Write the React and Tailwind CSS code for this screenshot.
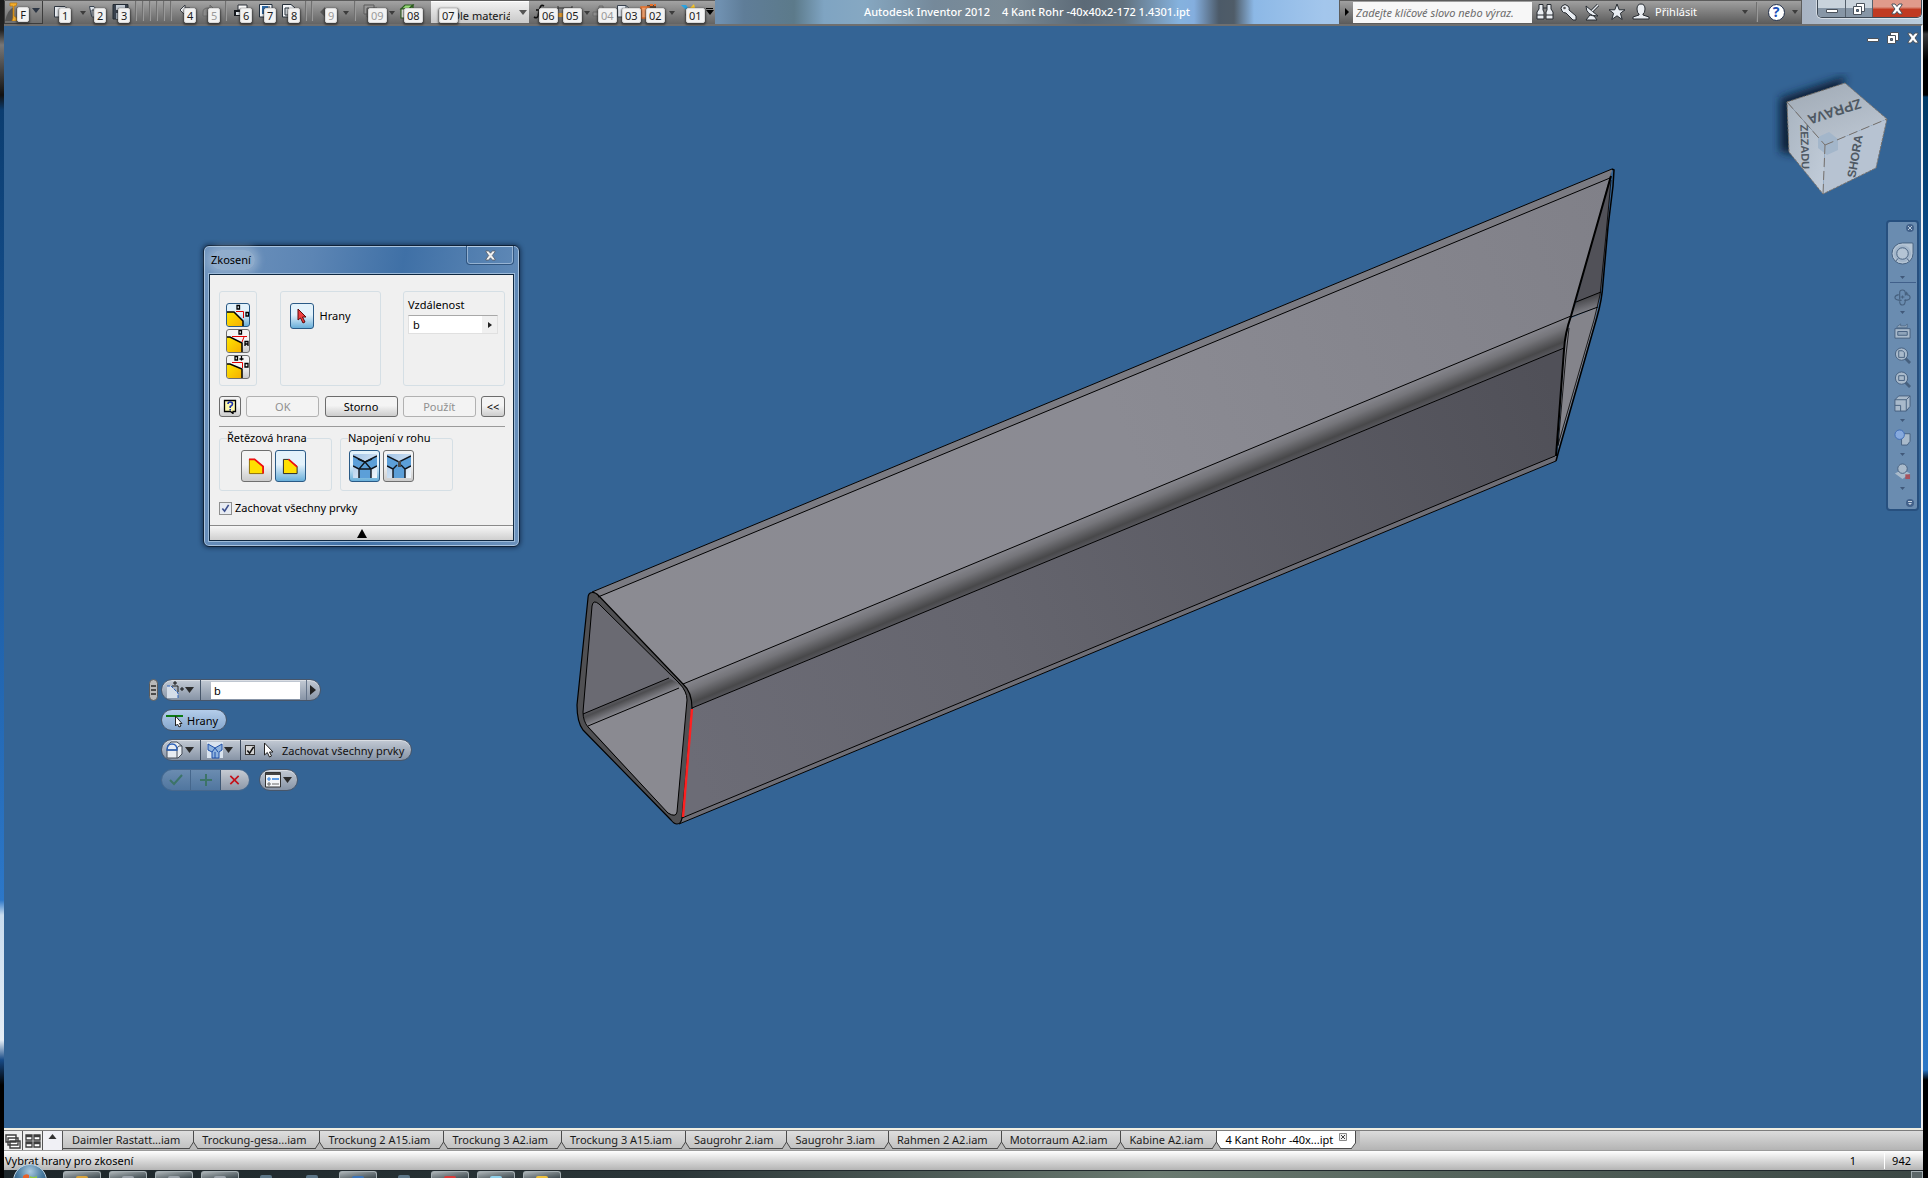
import React from "react";

const SANS = "font-['Noto_Sans','Open_Sans',sans-serif]";

/* ---------- shared bits ---------- */

function Caret({ className = "w-[7px] h-[4px]" }) {
  return (
    <svg viewBox="0 0 8 4" className={className} preserveAspectRatio="none" aria-hidden="true">
      <path d="M0 0H8L4 4Z" fill="currentColor" />
    </svg>
  );
}

/* ---------- quick access icons ---------- */

const quickIcons = {
  new: (
    <g stroke="#2f3640" fill="#e6eaef">
      <path d="M1.500 2.500H12L14.500 5V13H1.500Z" />
    </g>
  ),
  open: (
    <g stroke="#39424e" fill="#dfe5ec">
      <path d="M1.500 2.500H6L7.500 4.500H12V12H3.500Z" />
      <path d="M4 6H15L12 13H4Z" />
    </g>
  ),
  save: (
    <g>
      <path d="M1 0.500H16V15H1Z" fill="#39424f" stroke="#222a33" />
      <path d="M4 1H13V6H4Z" fill="#c4ccd5" />
      <path d="M4 9H13V15H4Z" fill="#aab6c4" />
    </g>
  ),
  undo: <path d="M7 1L2 6L7 11V8H12V4H7Z" fill="#f2f4f7" stroke="#3a3f46" />,
  redo: <path d="M1 12V8Q1 4 6 4H8V1L13 6L8 10V8H6V12Z" fill="#8b8b8b" stroke="#6a6a6a" />,
  print: (
    <g>
      <path d="M4 1H13V6H4Z" fill="#fff" stroke="#2a2f36" />
      <path d="M0 6H16V12H0Z" fill="#15181c" />
      <path d="M2 8H14V11H2Z" fill="#e7ecf1" />
    </g>
  ),
  preview: (
    <g>
      <path d="M1.500 0.500H14V13H1.500Z" fill="#f6f8fa" stroke="#25313e" />
      <path d="M4 2H10V10H4Z" fill="#2e6aa8" />
      <path d="M11 2V10" stroke="#25313e" />
    </g>
  ),
  project: (
    <g stroke="#27303a" fill="#f3f5f8">
      <path d="M0.500 0.500H9L13 4V13H0.500Z" />
      <path d="M3 4H7L8 6H12V11H3Z" fill="#dfe4ea" />
    </g>
  ),
  back: <path d="M6 3L1 8L6 13V10H12V6H6Z" fill="#565656" />,
  select: (
    <g fill="none" stroke="#5b5b5b">
      <path d="M2 1H12V10H2Z" fill="#9a9a9a" />
      <path d="M5 4H15V13H5Z" fill="#8d8d8d" />
    </g>
  ),
  cube: (
    <g stroke="#2d5a20" strokeWidth="1.200">
      <path d="M3 5L7 1H15L11 5Z" fill="#9be37b" />
      <path d="M3 5H11V14H3Z" fill="#f4f7f2" />
      <path d="M11 5L15 1V9L11 14Z" fill="#5fae3f" />
    </g>
  ),
  fx: (
    <g fill="none" stroke="#111" strokeWidth="1.600">
      <path d="M11 2Q8 0 7 4L5 12Q4 15 1 13" />
      <path d="M3 6H10" />
    </g>
  ),
  measure: (
    <g>
      <path d="M1 2V7M15 2V7M1 4H15" stroke="#333" fill="none" />
      <path d="M1 9H7V13H1Z" fill="#e79a2a" />
    </g>
  ),
  plus: <path d="M7 2H11V8H15V12H1V8H7Z" fill="#8e8e8e" stroke="#6a6a6a" />,
  page: (
    <g stroke="#39424e">
      <path d="M1.500 1.500H10L14.500 6V13H1.500Z" fill="#e8edf4" />
      <path d="M10 1.500V6H14.500Z" fill="#fff" />
    </g>
  ),
  box: (
    <g>
      <path d="M7 1H16V8H9V5H7Z" fill="#5a4434" />
      <path d="M1 3H9V14H1Z" fill="#f7a36d" stroke="#e8702a" strokeWidth="1.500" />
      <path d="M10 1H16" stroke="#e8702a" strokeWidth="2" strokeDasharray="3 1" />
    </g>
  ),
  brush: (
    <g>
      <path d="M1 1H6L9 5L6 6Z" fill="#2aa3e0" />
      <path d="M14 0L9 5L11 8L15 4Z" fill="#f6c52a" />
      <path d="M7 6L9 8L5 12Z" fill="#3a3a3a" />
    </g>
  ),
};

function QuickTool({ icon, tip, label, off }) {
  return (
    <button type="button" aria-label={label} className="relative h-6 w-6 shrink-0">
      <svg viewBox="0 0 17 16" className="absolute left-0 top-[3px] h-4 w-[17px]" aria-hidden="true">
        {quickIcons[icon]}
      </svg>
      <KeyTip tip={tip} off={off} />
    </button>
  );
}

function KeyTip({ tip, off }) {
  return (
    <span
      className={
        "absolute left-[6px] top-[7px] z-10 flex h-[15px] min-w-3 items-center justify-center rounded-[2px] border border-[#d8d8d8] bg-[#f2f2f2] px-[2px] text-[11px] leading-none shadow-[0_1px_2px_1px_rgba(40,40,40,0.7)] " +
        (off ? "text-[#9a9a9a]" : "text-[#1c1c1c]")
      }
    >
      {tip}
    </span>
  );
}

function DropArrow({ className, label }) {
  return (
    <button type="button" aria-label={label} className={"flex h-6 shrink-0 items-center justify-center text-[#3c3c3c] " + className}>
      <Caret className="h-[4px] w-[6px]" />
    </button>
  );
}

function Rule({ className }) {
  return <span className={"h-5 w-px shrink-0 bg-[#999] shadow-[-1px_0_0_#707070] " + className} />;
}

function QuickAccess() {
  return (
    <div className="flex h-6 shrink-0 items-start border-t border-[#5c5c5c] bg-gradient-to-b from-[#a3a3a3] to-[#646464]">
      <button type="button" aria-label="Nabídka aplikace" className="relative h-[23px] w-[39px] shrink-0 border border-t-0 border-[#3c3c3c] bg-gradient-to-b from-[#9c9c9c] to-[#6f6f6f]">
        <svg viewBox="0 0 16 20" className="absolute left-0 top-0 h-5 w-4" aria-hidden="true">
          <path d="M0 20Q3 8 9 6L9 20Z" fill="#555" />
          <path d="M5 2H12L11 5H9V15L12 17V20H7L8 17V5H5Z" fill="#f2ae2e" stroke="#b97608" strokeWidth="0.700" />
        </svg>
        <span className="absolute left-[6px] top-[-1px]"><KeyTip tip="F" /></span>
        <span className="absolute left-[27px] top-[7px] text-[#2c3644]"><Caret className="block h-[5px] w-2" /></span>
      </button>
      <span className="w-[10px]" />
      <QuickTool icon="new" tip="1" label="Nový" />
      <DropArrow className="w-[11px]" label="Nový: možnosti" />
      <QuickTool icon="open" tip="2" label="Otevřít" />
      <QuickTool icon="save" tip="3" label="Uložit" />
      <Rule className="ml-0" /><Rule className="ml-[6px]" /><Rule className="ml-[6px]" /><Rule className="ml-[6px]" /><Rule className="ml-[6px]" /><Rule className="ml-[6px]" />
      <span className="w-[6px]" />
      <QuickTool icon="undo" tip="4" label="Zpět" />
      <QuickTool icon="redo" tip="5" label="Znovu" off />
      <Rule className="mr-[7px]" />
      <QuickTool icon="print" tip="6" label="Tisk" />
      <QuickTool icon="preview" tip="7" label="Náhled" />
      <QuickTool icon="project" tip="8" label="Projekty" />
      <Rule className="ml-0" /><Rule className="ml-[5px] mr-[6px]" />
      <QuickTool icon="back" tip="9" label="Návrat" off />
      <DropArrow className="w-[6px]" label="Návrat: možnosti" />
      <Rule className="ml-[6px] mr-[6px]" />
      <QuickTool icon="select" tip="09" label="Výběr" off />
      <DropArrow className="w-3" label="Výběr: možnosti" />
      <QuickTool icon="cube" tip="08" label="Vzhled" />
      <span className="w-[9px]" />
      <div className="relative h-[22px] w-[98px] shrink-0 border-t border-white bg-gradient-to-b from-[#f1f1f1] to-[#c9c9c9]">
        <select aria-label="Barva" className="h-[21px] w-full appearance-none bg-transparent pl-[21px] pr-[19px] text-[11px] leading-[21px] text-[#111] outline-none">
          <option>Dle materiálu</option>
        </select>
        <span className="absolute right-[2px] top-[8px] text-[#555]"><Caret className="block h-[5px] w-2" /></span>
        <span className="absolute left-[2px] top-[-1px]"><KeyTip tip="07" /></span>
      </div>
      <span className="w-1" />
      <QuickTool icon="fx" tip="06" label="Parametry" />
      <QuickTool icon="measure" tip="05" label="Měřit" />
      <DropArrow className="w-[11px]" label="Měřit: možnosti" />
      <QuickTool icon="plus" tip="04" label="Přidat" off />
      <QuickTool icon="page" tip="03" label="List" />
      <QuickTool icon="box" tip="02" label="Součást" />
      <DropArrow className="w-4" label="Součást: možnosti" />
      <QuickTool icon="brush" tip="01" label="Vzhledy" />
      <button type="button" aria-label="Přizpůsobit" className="flex h-5 w-[11px] shrink-0 flex-col items-center justify-center gap-[1px] text-black">
        <span className="h-px w-[7px] bg-black" />
        <Caret className="h-[5px] w-2" />
      </button>
    </div>
  );
}

/* ---------- info center ---------- */

function InfoIcon({ label, children }) {
  return (
    <button type="button" aria-label={label} className="flex h-6 w-6 shrink-0 items-center justify-center">
      <svg viewBox="0 0 18 18" className="h-[18px] w-[18px]" aria-hidden="true">{children}</svg>
    </button>
  );
}

function InfoCenter() {
  return (
    <div className="flex h-6 shrink-0 items-center border border-[#5c5c5c] bg-gradient-to-b from-[#a0a0a0] to-[#5e5e5e] text-[#f3f3f3]">
      <button type="button" aria-label="Sbalit" className="flex h-full w-[13px] items-center justify-center text-black">
        <svg viewBox="0 0 4 8" className="h-2 w-1" aria-hidden="true"><path d="M0 0L4 4L0 8Z" fill="currentColor" /></svg>
      </button>
      <input aria-label="Hledat" placeholder="Zadejte klíčové slovo nebo výraz." className="mr-px h-[21px] w-[179px] bg-[#f7f7f7] pl-[3px] text-[11px] italic text-[#555] outline-none placeholder:text-[#6b6b6b]" />
      <InfoIcon label="Hledat">
        <g fill="#e9edf2" stroke="#262b31">
          <path d="M3 1.500H7V7L8 9V16H1V9L3 6Z" />
          <path d="M11 1.500H15V6L17 9V16H10V9L11 7Z" />
          <path d="M7 5H11M1 12H8M10 12H17" />
        </g>
      </InfoIcon>
      <InfoIcon label="Předplatné">
        <path d="M2 3Q5 0 8 3Q10 5 9 7L16 13V17H13L6 10Q3 10 2 8Q0 5 2 3Z" fill="#e9edf2" stroke="#262b31" />
        <circle cx="4.500" cy="5" r="1.300" fill="#555" />
      </InfoIcon>
      <InfoIcon label="Komunikační centrum">
        <g fill="#e9edf2" stroke="#262b31">
          <path d="M6 12L2 17H13L10 13Z" />
          <path d="M2 3Q2 13 14 13Z" />
          <path d="M8 8L14 2" strokeWidth="3" />
          <path d="M8 8L14 2" stroke="#e9edf2" strokeWidth="1.500" />
        </g>
      </InfoIcon>
      <InfoIcon label="Oblíbené">
        <path d="M9 1L11.200 6.800H17L12.400 10.300L14.200 16.500L9 12.800L3.800 16.500L5.600 10.300L1 6.800H6.800Z" fill="#e9edf2" stroke="#262b31" />
      </InfoIcon>
      <button type="button" className="flex h-6 items-center gap-[2px] text-[11px] text-white">
        <span className="flex w-6 justify-center">
          <svg viewBox="0 0 18 18" className="h-[18px] w-[18px]" aria-hidden="true">
            <path d="M9 1Q13 1 13 6Q13 10 11 11V12L17 14V16H1V14L7 12V11Q5 10 5 6Q5 1 9 1Z" fill="#e9edf2" stroke="#262b31" />
          </svg>
        </span>
        Přihlásit
      </button>
      <DropArrow className="ml-[42px] w-3" label="Účet" />
      <Rule className="ml-[6px] mr-[6px]" />
      <button type="button" aria-label="Nápověda" className="flex h-6 w-6 items-center justify-center">
        <span className="flex h-[17px] w-[17px] items-center justify-center rounded-full border border-[#22304a] bg-white text-[14px] font-bold leading-none text-[#1d50b8]">?</span>
      </button>
      <DropArrow className="w-[13px]" label="Nápověda: možnosti" />
    </div>
  );
}

function WinGlyph({ kind }) {
  return (
    <svg viewBox="0 0 12 12" className="h-3 w-3" aria-hidden="true">
      {kind === "min" && <path d="M0.500 6.500H11.500V9.500H0.500Z" fill="#fff" stroke="#4a525c" />}
      {kind === "max" && (
        <g fill="#fff" stroke="#4a525c">
          <path d="M3.500 0.500H11.500V8.500H3.500Z" />
          <path d="M0.500 3.500H8.500V11.500H0.500Z" />
          <path d="M3.500 6.500H5.500V8.500H3.500Z" fill="#5a7fa6" />
        </g>
      )}
      {kind === "close" && (
        <path d="M1 1H4L6 3.500L8 1H11V2L8 6L11 10V11H8L6 8.500L4 11H1V10L4 6L1 2Z" fill="#fff" stroke="#4a525c" />
      )}
    </svg>
  );
}

function TitleBar() {
  return (
    <header className="flex h-6 w-full shrink-0 bg-[linear-gradient(90deg,#6f90b0_0px,#6f90b0_716px,#5f7d98_740px,#5c7a8a_790px,#7fa4c2_820px,#86a8c2_860px,#75899a_930px,#7b8b96_1000px,#5c6a77_1080px,#62727f_1120px,#85b2de_1175px,#84aede_1190px,#4c5a68_1215px,#4f5c68_1230px,#8cb8e6_1250px,#a3c6ec_1320px,#a8b4c4_1800px,#b9cddd_100%)]">
      <QuickAccess />
      <h1 className="flex h-6 min-w-0 flex-1 items-center justify-center gap-3 whitespace-nowrap text-[11px] font-medium leading-6 text-white">
        <span>Autodesk Inventor 2012</span>
        <span>4 Kant Rohr -40x40x2-172 1.4301.ipt</span>
      </h1>
      <InfoCenter />
      <div className="ml-[15px] mr-px flex h-[18px] shrink-0 overflow-hidden rounded-b-[5px] border border-t-0 border-[#3f4a56] shadow-[0_0_0_1px_rgba(255,255,255,0.5)]">
        <button type="button" aria-label="Minimalizovat" className="flex w-7 items-center justify-center border-r border-[#55606c] bg-gradient-to-b from-[#c9d3dc] from-45% to-[#8796a6] to-50%"><WinGlyph kind="min" /></button>
        <button type="button" aria-label="Obnovit" className="flex w-[27px] items-center justify-center border-r border-[#55606c] bg-gradient-to-b from-[#c9d3dc] from-45% to-[#8796a6] to-50%"><WinGlyph kind="max" /></button>
        <button type="button" aria-label="Zavřít" className="flex w-12 items-center justify-center bg-gradient-to-b from-[#e09a8b] from-40% to-[#c03a22] to-55%"><WinGlyph kind="close" /></button>
      </div>
    </header>
  );
}

/* ---------- 3D model ---------- */

function TubeModel() {
  return (
    <svg viewBox="573 160 1046 670" className="absolute left-[569px] top-[134px] h-[670px] w-[1046px]" role="img" aria-label="4 Kant Rohr">
      <defs>
        <linearGradient id="top" gradientUnits="userSpaceOnUse" x1="600" y1="600" x2="1610" y2="180">
          <stop offset="0" stopColor="#8b8b92" /><stop offset="0.500" stopColor="#8b8b93" /><stop offset="1" stopColor="#808088" />
        </linearGradient>
        <linearGradient id="side" gradientUnits="userSpaceOnUse" x1="690" y1="760" x2="1560" y2="400">
          <stop offset="0" stopColor="#6c6c76" /><stop offset="0.350" stopColor="#65656e" /><stop offset="1" stopColor="#505058" />
        </linearGradient>
        <linearGradient id="bend" gradientUnits="userSpaceOnUse" x1="683" y1="684" x2="693.600" y2="709.600">
          <stop offset="0" stopColor="#86868d" /><stop offset="0.300" stopColor="#75757a" /><stop offset="0.750" stopColor="#48484a" /><stop offset="1" stopColor="#5c5c63" />
        </linearGradient>
        <linearGradient id="innerBend" gradientUnits="userSpaceOnUse" x1="620" y1="698" x2="625" y2="710">
          <stop offset="0" stopColor="#5c5c62" /><stop offset="0.300" stopColor="#4d4d50" /><stop offset="1" stopColor="#85858c" />
        </linearGradient>
        <linearGradient id="endBend" gradientUnits="userSpaceOnUse" x1="1586" y1="298" x2="1590" y2="312">
          <stop offset="0" stopColor="#48484c" /><stop offset="1" stopColor="#85858c" />
        </linearGradient>
      </defs>

      <path d="M592 592L1612 169L1610 178L1571 317L1565 337L1556 461L679 824L600 740Z" fill="url(#top)" />
      <path d="M592 592L1612 169L1610 178L598 597Z" fill="#7b7b82" />
      <path d="M683 684L1571 316L1566 336L1564 348L692 708L689 693Z" fill="url(#bend)" />
      <path d="M692 708L1564 348L1556 456L682 818Z" fill="url(#side)" />
      <path d="M682 818L1556 456L1556 461L679 824Z" fill="#6e6e76" />

      <path d="M1611 172L1608 227L1601 293L1576 302Z" fill="#515158" />
      <path d="M1576 302L1601 292L1598 307L1571 317Z" fill="url(#endBend)" />
      <path d="M1571 318L1598 307L1594 325L1558 450L1564 350L1566 336Z" fill="#84848b" />

      <path d="M588 598Q588 593 592 592.500Q595 592 599 596L683 684Q692 692 692 708L682 818Q681 824 677 824Q674 824 671 820L583 730Q577 722 577 705Z" fill="#505053" stroke="#000" strokeWidth="1.200" />
      <path d="M592 606Q593 600 599 604L679 683L583 714Z" fill="#6a6a72" />
      <path d="M583 714L669 678L679 684L684 689L588 727Q583 721 583 714Z" fill="url(#innerBend)" />
      <path d="M588 726L681 687Q687 693 687 700L677 812Q676 817 668 813Z" fill="#8a8a91" />

      <g fill="none" stroke="#000" strokeWidth="1">
        <path d="M592 606Q593 599 599 604L679 683Q687 691 687 700L677 812Q676 818 668 813L588 727Q583 721 583 712Z" />
        <path d="M583 714L669 678M588 726L679 688" />
        <path d="M592 592L1612 169M598 597L1610 178M683 684L1571 316M692 708L1564 348M682 818L1555 456M679 824L1556 461" />
        <path d="M1612 169L1614 170L1613 186L1608 227L1603 283Q1602 300 1597 317L1559 450L1556 461" strokeWidth="1.500" />
        <path d="M1611 180L1606 235L1600 295L1594 320L1558 445" strokeWidth="0.800" />
        <path d="M1611 176L1571 316Q1565 333 1564 350L1556 456" strokeWidth="2" />
        <path d="M1576 302L1601 292M1571 317L1598 307" />
        <path d="M1569 328L1566 355L1558 446" strokeWidth="0.800" />
      </g>
      <path d="M692 709L683 817" stroke="#ff2020" strokeWidth="2.400" />
    </svg>
  );
}

function ViewCube() {
  return (
    <svg viewBox="1772 72 126 136" className="absolute right-[23px] top-[46px] h-[136px] w-[126px]" role="img" aria-label="ViewCube">
      <defs>
        <filter id="soft" x="-30%" y="-30%" width="160%" height="160%"><feGaussianBlur stdDeviation="4" /></filter>
        <linearGradient id="cubeTop" x1="0" y1="0" x2="0.600" y2="1"><stop offset="0" stopColor="#9fa9b4" /><stop offset="1" stopColor="#bac4d0" /></linearGradient>
        <linearGradient id="cubeLeft" x1="0" y1="0" x2="1" y2="1"><stop offset="0" stopColor="#a9b4c0" /><stop offset="1" stopColor="#c3cedb" /></linearGradient>
      </defs>
      <path d="M1780 98L1846 76L1830 120L1798 155L1780 152Z" fill="#10233a" filter="url(#soft)" />
      <path d="M1787 102L1845 83L1887 119L1825 145Z" fill="url(#cubeTop)" />
      <path d="M1787 102L1825 145L1823 194L1789 152Z" fill="url(#cubeLeft)" />
      <path d="M1825 145L1887 119L1876 168L1823 194Z" fill="#b7c3d2" />
      <path d="M1818 137L1829 132L1838 139V150L1827 155L1818 148Z" fill="#a3b6ca" />
      <g fill="none" stroke="#77716c" strokeWidth="1">
        <path d="M1787 102L1845 83L1887 119L1876 168L1823 194L1789 152Z" strokeDasharray="3 1" />
        <path d="M1787 102L1825 145M1825 145L1887 119M1825 145L1823 194" strokeDasharray="9 4" />
      </g>
      <g fill="#4f5963" className="font-['Liberation_Sans',sans-serif] font-bold" textAnchor="middle">
        <text transform="translate(1833 107) rotate(162)" className="text-[14px]">ZPRAVA</text>
        <text transform="translate(1801 147) rotate(88)" className="text-[11px]">ZEZADU</text>
        <text transform="translate(1859 157) rotate(-80)" className="text-[12px]">SHORA</text>
      </g>
    </svg>
  );
}

/* ---------- navigation bar ---------- */

function NavButton({ label, className, children }) {
  return (
    <button type="button" aria-label={label} className={"flex w-full shrink-0 items-center justify-center " + className}>
      <svg viewBox="0 0 18 18" className="h-[17px] w-[17px]" aria-hidden="true" fill="#a9bacb" stroke="#46607e" strokeWidth="1">
        {children}
      </svg>
    </button>
  );
}

function NavCaret({ label }) {
  return (
    <button type="button" aria-label={label} className="flex h-[10px] w-full items-center justify-center text-[#41597a]">
      <Caret className="h-[3px] w-[5px]" />
    </button>
  );
}

function NavigationBar() {
  return (
    <nav aria-label="Navigace" className="absolute right-[2px] top-[194px] flex w-[33px] flex-col items-center rounded-[4px] border-2 border-[#27507f] bg-[#6a8cb0] pb-[2px]">
      <button type="button" aria-label="Zavřít navigaci" className="mr-[3px] mt-[2px] flex h-2 w-2 items-center justify-center self-end rounded-full bg-[#42618a] text-[#b9c9da]">
        <svg viewBox="0 0 8 8" className="h-2 w-2" aria-hidden="true"><path d="M2 2L6 6M6 2L2 6" stroke="currentColor" /></svg>
      </button>
      <button type="button" aria-label="Navigační kolo" className="mt-2 flex h-[26px] w-full items-center justify-center">
        <svg viewBox="0 0 24 24" className="h-[23px] w-[23px]" aria-hidden="true" fill="#b4c4d4" stroke="#46607e">
          <path d="M12 1H22Q23 1 23 2V12A11 11 0 1 1 12 1Z" />
          <circle cx="12" cy="12" r="9" fill="#a3b6ca" stroke="none" />
          <circle cx="12" cy="12" r="6" />
          <path d="M7.500 17L5 20M16.500 17L19 20" />
        </svg>
      </button>
      <div className="h-[6px]" />
      <NavCaret label="Navigační kolo: možnosti" />
      <div className="h-px w-[26px] bg-[#41608a]" />
      <NavButton label="Orbita" className="mt-1 h-5">
        <g fill="none" strokeWidth="1.200">
          <path d="M6 11V4Q6 1 9 1Q12 1 12 5V7M12 11Q12 17 9 17Q6 17 6 13" />
          <path d="M5 6Q1 7 1 9Q1 12 8 12M11 12Q17 12 17 9Q17 6 13 6" />
          <path d="M9 7V10M7 8.500H11M13 3V6M12 4.500H15" />
        </g>
      </NavButton>
      <NavCaret label="Orbita: možnosti" />
      <NavButton label="Otočit pohled" className="mt-[2px] h-6">
        <path d="M1 6H17V16H1Z" /><path d="M4 9H14V13H4Z" fill="#8fa4ba" />
        <path d="M3 4L7 1V3H12L14 1V5H3Z" strokeWidth="0.700" fill="#8fa4ba" />
      </NavButton>
      <NavButton label="Zoom vše" className="h-6">
        <path d="M12 12L17 17" strokeWidth="3" /><circle cx="8" cy="7.500" r="6.500" /><path d="M5 4H9L11 6V11H5Z" />
      </NavButton>
      <NavButton label="Zoom okno" className="h-6">
        <path d="M12 12L17 17" strokeWidth="3" /><circle cx="8" cy="7.500" r="6.500" /><path d="M5 5H11V10H5Z" />
      </NavButton>
      <NavButton label="Pohled na plochu" className="h-6">
        <path d="M1 5L5 1H17V12L13 17H1Z" /><path d="M1 5H13V17M13 5L17 1M1 11H7V17" fill="none" />
      </NavButton>
      <NavCaret label="Pohled: možnosti" />
      <NavButton label="Vizuální styl" className="h-6">
        <path d="M8 8L11 5H17V13L14 17H8Z" /><circle cx="6" cy="6" r="5" fill="#86a9dd" stroke="#3e69b3" />
      </NavButton>
      <NavCaret label="Vizuální styl: možnosti" />
      <NavButton label="Stíny" className="h-6">
        <path d="M1 11L5 9H13L17 11L9 17Z" stroke="none" /><circle cx="9" cy="6" r="5" /><path d="M12 12H17V17H12Z" fill="#a7535e" stroke="none" />
      </NavButton>
      <NavCaret label="Stíny: možnosti" />
      <button type="button" aria-label="Přizpůsobit navigaci" className="mr-[3px] mt-[6px] flex h-2 w-2 flex-col items-center justify-center gap-px self-end rounded-full bg-[#42618a] text-[#c3d0de]">
        <span className="h-px w-1 bg-[#c3d0de]" /><Caret className="h-[2px] w-[4px]" />
      </button>
    </nav>
  );
}

/* ---------- chamfer dialog ---------- */

function ToolButton({ label, active, className, children }) {
  return (
    <button
      type="button"
      aria-label={label}
      aria-pressed={!!active}
      className={
        "flex shrink-0 items-center justify-center overflow-hidden rounded-[3px] border " +
        (active
          ? "border-[#2a5a86] bg-gradient-to-b from-[#e3f2fb] from-45% to-[#68afd9] "
          : "border-[#6f6f6f] bg-gradient-to-b from-[#f4f4f4] from-45% to-[#cbcbcb] ") +
        className
      }
    >
      {children}
    </button>
  );
}

function ChamferGlyph({ kind }) {
  return (
    <svg viewBox="0 0 24 24" className="h-6 w-6 shrink-0" aria-hidden="true">
      <defs>
        <linearGradient id={"gold" + kind} x1="0" y1="0" x2="1" y2="1"><stop offset="0" stopColor="#ffe600" /><stop offset="1" stopColor="#f5ac00" /></linearGradient>
      </defs>
      {kind === "dd" && (
        <g fill="none">
          <path d="M1 9H8L17 18V24H1Z" fill="url(#golddd)" />
          <path d="M1 9H8L17 18V24" stroke="#000" strokeWidth="1.500" />
          <path d="M10 8.500H17.500V15" stroke="#e00000" />
          <path d="M11 2.500H13.500V6H11ZM20 9.500H22.500V13H20Z" stroke="#000" strokeWidth="1.300" />
        </g>
      )}
      {kind === "da" && (
        <g fill="none">
          <path d="M1 8H4L16 14V24H1Z" fill="url(#goldda)" />
          <path d="M1 8H4L16 14V24" stroke="#000" strokeWidth="1.500" />
          <path d="M6 7.500H21M18 8L16 13" stroke="#e00000" />
          <path d="M13 1.500H15.500V5H13ZM19 17V12.500H22V17M19 15H22" stroke="#000" strokeWidth="1.300" />
        </g>
      )}
      {kind === "d2" && (
        <g fill="none">
          <path d="M1 9H4L16 14V24H1Z" fill="url(#goldd2)" />
          <path d="M1 9H4L16 14V24" stroke="#000" strokeWidth="1.500" />
          <path d="M6 7.500H16.500V13" stroke="#e00000" />
          <path d="M9 1.500H11.500V5H9ZM15.500 1V5.500M13.500 4H17.500M19 8.500H22V12H19Z" stroke="#000" strokeWidth="1.300" />
        </g>
      )}
    </svg>
  );
}

function EdgeGlyph({ open }) {
  return (
    <svg viewBox="0 0 18 18" className="h-[17px] w-[17px]" aria-hidden="true">
      <path d="M1.500 1.500H7L16 9V16.500H1.500Z" fill="#ffe000" stroke={open ? "#222" : "#8a6a00"} />
      <path d={open ? "M7 1.500L16 9.500" : "M1 1.500H7L16 9V16.500"} fill="none" stroke="#f01010" strokeWidth="1.800" />
    </svg>
  );
}

function CornerGlyph({ variant }) {
  const id = "sheet" + variant;
  return (
    <svg viewBox="0 0 24 24" className="h-6 w-6" aria-hidden="true">
      <defs>
        <linearGradient id={id} x1="0" y1="0" x2="1" y2="1"><stop offset="0" stopColor="#9fc2e6" /><stop offset="1" stopColor="#f2f7fc" /></linearGradient>
      </defs>
      <path d="M0 0H24V24H0Z" fill={"url(#" + id + ")"} />
      <path d="M0 2L12 8L24 2V12L18 15V24H6V15L0 12Z" fill="#5c9fd8" />
      <g fill="none" stroke="#10151c" strokeWidth="1.400">
        <path d="M0 2L12 8L24 2M0 12L6 15V24M24 12L18 15V24" />
        {variant === "flat" ? <path d="M6 15H18M5 5L12 8L18 15M19 5L12 8L6 15" /> : <path d="M6 15L10 11M18 15L14 11M12 7V12" />}
      </g>
      {variant === "flat" ? null : <path d="M11 7H14V13H11Z" fill="#4a4a4a" />}
    </svg>
  );
}

function PushButton({ children, className, ...rest }) {
  return (
    <button
      type="button"
      className={
        "flex h-[21px] shrink-0 items-center justify-center rounded-[3px] border text-[11px] leading-none disabled:border-[#b1b1b1] disabled:bg-[#f3f3f3] disabled:text-[#909090] enabled:border-[#6c6c6c] enabled:bg-gradient-to-b enabled:from-[#f4f4f4] enabled:from-45% enabled:to-[#cdcdcd] enabled:text-black " +
        className
      }
      {...rest}
    >
      {children}
    </button>
  );
}

const groupBox = "rounded-[3px] border border-[#d5dfe5]";

function ChamferDialog() {
  return (
    <section aria-label="Zkosení" className="absolute left-[199px] top-[219px] flex w-[317px] flex-col rounded-[6px] border border-[#0f2238] bg-[linear-gradient(100deg,#6f93bd_0%,#5c85b4_30%,#3f70a6_55%,#6d93bd_100%)] px-[5px] pb-[5px] shadow-[inset_0_0_0_1px_#a9c3de,0_0_4px_1px_rgba(10,25,50,0.6)]">
      <div className="flex h-7 items-start justify-between pl-[2px]">
        <h2 className="mt-1 rounded-full bg-[#b5c9de]/50 pr-1 text-[11px] leading-5 text-black shadow-[0_0_7px_4px_rgba(181,201,222,0.45)]">Zkosení</h2>
        <button type="button" aria-label="Zavřít dialog" className="flex h-[19px] w-12 items-center justify-center rounded-b-[4px] border border-t-0 border-[#30557f] shadow-[inset_0_0_0_1px_rgba(190,210,232,0.6)]">
          <svg viewBox="0 0 12 12" className="h-[11px] w-[11px]" aria-hidden="true">
            <path d="M1 1H4L6 3.500L8 1H11V2L8 6L11 10V11H8L6 8.500L4 11H1V10L4 6L1 2Z" fill="#f3f3f3" stroke="#5c6470" />
          </svg>
        </button>
      </div>
      <div className="border border-[#0e2740] bg-[#f0f0f0] shadow-[0_0_0_1px_#9dbad8]">
        <div className="pl-[9px] pr-2 pt-4">
          <div className="flex h-[95px] justify-between">
            <div className={"flex w-[38px] flex-col items-center gap-[2px] pt-[11px] " + groupBox}>
              <ToolButton label="Vzdálenost" active className="h-6 w-6"><ChamferGlyph kind="dd" /></ToolButton>
              <ToolButton label="Vzdálenost a úhel" className="h-6 w-6"><ChamferGlyph kind="da" /></ToolButton>
              <ToolButton label="Dvě vzdálenosti" className="h-6 w-6"><ChamferGlyph kind="d2" /></ToolButton>
            </div>
            <div className={"flex w-[101px] items-start gap-[6px] pl-[9px] pt-[11px] " + groupBox}>
              <ToolButton label="Vybrat hrany" active className="h-[26px] w-6">
                <svg viewBox="0 0 12 16" className="h-4 w-3" aria-hidden="true">
                  <path d="M2 1V12L4.500 10L7 15L9 14L6.500 9H10Z" fill="#f04040" stroke="#5a0a0a" />
                </svg>
              </ToolButton>
              <span className="text-[11px] leading-[26px] text-black">Hrany</span>
            </div>
            <div className={"w-[102px] px-1 pt-1 " + groupBox}>
              <label htmlFor="distance" className="mb-[2px] block text-[11px] leading-[17px] text-black">Vzdálenost</label>
              <div className="flex h-[19px] w-[90px] border border-[#e0e0e0] border-t-[#a8a8a8] bg-white">
                <input id="distance" defaultValue="b" className="h-full w-[73px] min-w-0 bg-white pl-1 text-[11px] leading-none text-black outline-none" />
                <button type="button" aria-label="Možnosti vzdálenosti" className="flex flex-1 items-center justify-center bg-[#f0f0f0]">
                  <svg viewBox="0 0 4 6" className="h-[6px] w-[4px]" aria-hidden="true"><path d="M0 0L4 3L0 6Z" fill="#222" /></svg>
                </button>
              </div>
            </div>
          </div>
          <div className="mt-[10px] flex justify-between">
            <PushButton className="w-[22px]" aria-label="Nápověda dialogu">
              <svg viewBox="0 0 14 15" className="h-[15px] w-[14px]" aria-hidden="true">
                <path d="M1.500 1.500H12.500V12.500H10V14.500L7.500 12.500H1.500Z" fill="#fffbb0" stroke="#000" strokeWidth="1.300" />
                <path d="M5 5Q5 3 7 3Q9.500 3 9.500 5Q9.500 6.500 7.200 7.500V9M7.200 10V11.500" fill="none" stroke="#1a2fb0" strokeWidth="1.600" />
              </svg>
            </PushButton>
            <PushButton className="w-[73px]" disabled>OK</PushButton>
            <PushButton className="w-[73px]">Storno</PushButton>
            <PushButton className="w-[73px]" disabled>Použít</PushButton>
            <PushButton className="w-6" aria-label="Méně">&lt;&lt;</PushButton>
          </div>
          <hr className="mt-[9px] border-t border-[#9b9b9b]" />
          <div className="mt-[3px] flex gap-2">
            <fieldset className={"flex h-[61px] w-[113px] px-[7px] " + groupBox}>
              <legend className="text-[11px] leading-4 text-black">Řetězová hrana</legend>
              <div className="flex gap-[3px] pl-[14px] pt-1">
                <ToolButton label="Všechny tečně spojené hrany" className="h-8 w-[31px]"><EdgeGlyph /></ToolButton>
                <ToolButton label="Jedna hrana" active className="h-8 w-[31px]"><EdgeGlyph open /></ToolButton>
              </div>
            </fieldset>
            <fieldset className={"flex h-[61px] w-[113px] px-[7px] " + groupBox}>
              <legend className="text-[11px] leading-4 text-black">Napojení v rohu</legend>
              <div className="flex gap-[3px] pl-px pt-1">
                <ToolButton label="S napojením" active className="h-8 w-[31px]"><CornerGlyph variant="flat" /></ToolButton>
                <ToolButton label="Bez napojení" className="h-8 w-[31px]"><CornerGlyph variant="point" /></ToolButton>
              </div>
            </fieldset>
          </div>
          <label className="mt-[9px] flex h-4 items-center gap-[3px] text-[11px] leading-4 text-black">
            <CheckBox id="keepAll" />
            Zachovat všechny prvky
          </label>
        </div>
        <button type="button" aria-label="Sbalit dialog" className="mt-[9px] flex h-[15px] w-full items-center justify-center border-t border-[#8a8a8a] bg-gradient-to-b from-[#f7f7f7] to-[#cfcfcf]">
          <svg viewBox="0 0 10 9" className="h-[9px] w-[10px]" aria-hidden="true"><path d="M5 0L10 9H0Z" fill="#000" /></svg>
        </button>
      </div>
    </section>
  );
}

function CheckBox({ id, small }) {
  return (
    <span className={"relative flex shrink-0 items-center justify-center " + (small ? "h-[10px] w-[10px]" : "h-[13px] w-[13px]")}>
      <input
        id={id}
        type="checkbox"
        defaultChecked
        className={"peer absolute inset-0 h-full w-full appearance-none border " + (small ? "border-[#333] bg-[#d5d5d5]" : "border-[#8e8f8f] bg-[#e8ecf3]")}
      />
      <svg viewBox="0 0 10 10" className="pointer-events-none relative h-[9px] w-[9px] opacity-0 peer-checked:opacity-100" aria-hidden="true">
        <path d="M1.500 5L4 8L8.500 1" fill="none" stroke={small ? "#111" : "#3c4f8e"} strokeWidth="1.800" />
      </svg>
    </span>
  );
}

/* ---------- in-canvas mini toolbar ---------- */

const pill = "flex h-[22px] items-center border border-[#47566a] bg-gradient-to-b from-[#c3cad4] to-[#8794a6] shadow-[inset_0_1px_0_rgba(255,255,255,0.4)]";

function MiniDrop({ label, className, children }) {
  return (
    <button type="button" aria-label={label} className={"flex h-full items-center gap-px text-[#2b2b2b] " + className}>
      {children}
      <Caret className="h-[6px] w-[9px]" />
    </button>
  );
}

function PointerGlyph() {
  return (
    <svg viewBox="0 0 11 16" className="h-4 w-[11px]" aria-hidden="true">
      <path d="M1.500 1V13L4.300 10.500L6.500 15L8.500 14L6.500 10H10Z" fill="#fff" stroke="#222" />
    </svg>
  );
}

function MiniToolbar() {
  return (
    <div className="absolute left-[145px] top-[653px] flex items-start gap-[3px]">
      <span className="flex h-[22px] w-[9px] flex-col items-center justify-center gap-[2px] rounded-full border border-[#5b5b5b] bg-[#b9b9b9]">
        <i className="h-[2px] w-[5px] bg-[#4c4c4c]" /><i className="h-[2px] w-[5px] bg-[#4c4c4c]" /><i className="h-[2px] w-[5px] bg-[#4c4c4c]" />
      </span>
      <div className="flex flex-col items-start gap-2">
        <div className={pill + " rounded-full"}>
          <MiniDrop label="Typ zkosení" className="w-[39px] border-r border-[#47566a] pl-1">
            <svg viewBox="0 0 18 18" className="h-[18px] w-[18px]" aria-hidden="true">
              <path d="M1 5H5L12 12V17H1Z" fill="#d5dde8" />
              <path d="M1 5H5L12 12V17" fill="none" stroke="#2b60b8" strokeDasharray="3 1" />
              <path d="M6 5H12V11" fill="none" stroke="#222" />
              <path d="M8 1H10V3H8ZM15 7H17V9H15Z" fill="none" stroke="#111" />
            </svg>
          </MiniDrop>
          <input aria-label="Vzdálenost" defaultValue="b" className="ml-[10px] mr-[6px] h-[17px] w-[89px] bg-white px-[3px] text-[11px] leading-none text-black outline-none" />
          <button type="button" aria-label="Další možnosti" className="flex h-full w-[14px] items-center justify-center border-l border-[#66758a] pr-[2px]">
            <svg viewBox="0 0 6 10" className="h-[10px] w-[6px]" aria-hidden="true"><path d="M0 0L6 5L0 10Z" fill="#222" /></svg>
          </button>
        </div>
        <button type="button" className="flex h-[22px] items-center gap-[3px] rounded-full border border-[#47566a] bg-gradient-to-b from-[#b4cdea] to-[#86a7cd] pl-1 pr-2 text-[11px] leading-none text-black">
          <svg viewBox="0 0 18 16" className="h-4 w-[18px]" aria-hidden="true">
            <path d="M0 4H17" stroke="#0c7a12" strokeWidth="2" />
            <path d="M9.500 4V14L11.500 12L13 15L15 14L13.500 11.500H16Z" fill="#fff" stroke="#222" />
          </svg>
          Hrany
        </button>
        <div className={pill + " rounded-full"}>
          <MiniDrop label="Řetězová hrana" className="w-[39px] border-r border-[#3c4a5d] pl-1">
            <svg viewBox="0 0 18 18" className="h-[18px] w-[18px]" aria-hidden="true">
              <path d="M1 9Q1 4 5 1H11L16 5V13L12 17H1Z" fill="#e7ecf2" stroke="#444d58" />
              <path d="M1 9H11V17M11 9Q11 4 16 5" fill="none" stroke="#444d58" />
              <path d="M1 9Q1 3 6 3Q11 3 11 9Z" fill="none" stroke="#2b60b8" strokeWidth="1.300" />
            </svg>
          </MiniDrop>
          <MiniDrop label="Napojení v rohu" className="w-10 border-r border-[#3c4a5d] pl-[6px]">
            <svg viewBox="0 0 16 18" className="h-[18px] w-4" aria-hidden="true">
              <path d="M0 1H16V17H0Z" fill="#d9e3ee" />
              <path d="M1 3L8 7L15 3V9L12 11V17H5V11L1 9Z" fill="#8fb3de" stroke="#1e4fa8" />
              <path d="M5 11L8 7L11 11M8 11V17" fill="none" stroke="#1e4fa8" />
            </svg>
          </MiniDrop>
          <label className="flex h-full items-center gap-2 pl-1 pr-[7px] text-[11px] leading-none text-[#111]">
            <CheckBox id="miniKeep" small />
            <PointerGlyph />
            <span>Zachovat všechny prvky</span>
          </label>
        </div>
        <div className="flex gap-[9px]">
          <div className="flex h-[22px] overflow-hidden rounded-full border border-[#47688d]">
            <button type="button" aria-label="OK" disabled className="flex w-[29px] items-center justify-center border-r border-[#46678c] bg-gradient-to-b from-[#6b8cb0] to-[#50769f]">
              <svg viewBox="0 0 14 12" className="h-3 w-[14px]" aria-hidden="true"><path d="M1 6L5 10L13 1" fill="none" stroke="#3c7468" strokeWidth="2" /></svg>
            </button>
            <button type="button" aria-label="Použít" disabled className="flex w-[30px] items-center justify-center border-r border-[#3f5875] bg-gradient-to-b from-[#6b8cb0] to-[#50769f]">
              <svg viewBox="0 0 12 12" className="h-3 w-3" aria-hidden="true"><path d="M6 0V12M0 6H12" stroke="#3c7468" strokeWidth="2" /></svg>
            </button>
            <button type="button" aria-label="Storno" className="flex w-7 items-center justify-center bg-gradient-to-b from-[#c6cbd3] to-[#8d98a8] pr-[2px]">
              <svg viewBox="0 0 12 12" className="h-[10px] w-[11px]" aria-hidden="true"><path d="M1 1L11 11M11 1L1 11" stroke="#c4131b" strokeWidth="2" /></svg>
            </button>
          </div>
          <div className={pill + " rounded-full"}>
            <MiniDrop label="Možnosti panelu" className="w-[37px] pl-[5px]">
              <svg viewBox="0 0 16 16" className="mr-px h-4 w-4" aria-hidden="true">
                <path d="M0.500 0.500H15.500V15H0.500Z" fill="#f4f6f8" stroke="#333" />
                <path d="M1 2H15" stroke="#444" strokeWidth="2" />
                <path d="M7 7H14" stroke="#2c7fe0" strokeWidth="1.500" /><path d="M3 6H5V8H3Z" fill="none" stroke="#2c7fe0" />
                <path d="M7 12H14" stroke="#666" /><path d="M3 11H5V13H3Z" fill="none" stroke="#666" />
              </svg>
            </MiniDrop>
          </div>
        </div>
      </div>
    </div>
  );
}

/* ---------- bottom ---------- */

const documents = [
  "Daimler Rastatt...iam", "Trockung-gesa...iam", "Trockung 2 A15.iam", "Trockung 3 A2.iam", "Trockung 3 A15.iam",
  "Saugrohr 2.iam", "Saugrohr 3.iam", "Rahmen 2 A2.iam", "Motorraum A2.iam", "Kabine A2.iam",
];

function TabJoint({ last }) {
  return (
    <svg viewBox="0 0 9 18" className="absolute -right-[5px] top-0 z-10 h-[18px] w-[9px]" aria-hidden="true">
      <path d={last ? "M0 18L4.500 12V0H9V18Z" : "M0 18L4.500 11L9 18Z"} fill="#b9b9b9" />
      <path d={last ? "M4.500 0V12L0 18" : "M4.500 0V11M0 18L4.500 11L9 18"} fill="none" stroke="#4a4a4a" />
    </svg>
  );
}

function DocumentTabs() {
  return (
    <div className="flex h-[21px] w-full items-start border-t border-b border-t-[#7c7c7c] border-b-[#9b9b9b] bg-gradient-to-b from-[#dcdcdc] to-[#b4b4b4] text-[11px] text-[#1b1b1b]">
      <button type="button" aria-label="Kaskáda" className="flex h-[19px] w-[19px] items-center justify-center border-r border-[#555] bg-[#eee]">
        <svg viewBox="0 0 16 16" className="h-4 w-4" fill="#fff" stroke="#3c3c3c" strokeWidth="1.400" aria-hidden="true"><path d="M1 2H11V9H1ZM3 5H13V12H3ZM5 8H15V15H5Z" /></svg>
      </button>
      <button type="button" aria-label="Uspořádat" className="flex h-[19px] w-5 items-center justify-center border-r border-[#555] bg-[#eee]">
        <svg viewBox="0 0 16 16" className="h-4 w-4" fill="#fff" stroke="#3c3c3c" strokeWidth="1.300" aria-hidden="true"><path d="M1 2H7V7H1ZM9 2H15V7H9ZM1 9H7V14H1ZM9 9H15V14H9ZM1 3.500H7M9 3.500H15M1 10.500H7M9 10.500H15" /></svg>
      </button>
      <button type="button" aria-label="Seznam dokumentů" className="flex h-[19px] w-5 items-start justify-center border-r border-[#555] bg-[#f0f0f5] pt-[3px]">
        <svg viewBox="0 0 8 5" className="h-[5px] w-[9px]" aria-hidden="true"><path d="M4 0L8 5H0Z" fill="#333" /></svg>
      </button>
      <div role="tablist" className="flex">
        {documents.map((name) => (
          <div key={name} className="relative flex">
            <button type="button" role="tab" aria-selected="false" className="h-[18px] whitespace-nowrap border-b border-[#4a4a4a] bg-gradient-to-b from-[#dedede] to-[#c2c2c2] pl-[9px] pr-[13px] leading-[17px]">{name}</button>
            <TabJoint />
          </div>
        ))}
        <div className="relative flex">
          <button type="button" role="tab" aria-selected="true" className="flex h-[18px] gap-[6px] whitespace-nowrap border-b border-[#4a4a4a] bg-white pl-[9px] pr-2 leading-[17px] text-black">
            4 Kant Rohr -40x...ipt
            <svg viewBox="0 0 8 8" className="mt-[2px] h-2 w-2" aria-hidden="true"><path d="M0.500 0.500H7.500V7.500H0.500Z" fill="#eee" stroke="#888" /><path d="M2 2L6 6M6 2L2 6" stroke="#444" /></svg>
          </button>
          <TabJoint last />
        </div>
      </div>
    </div>
  );
}

function StatusBar() {
  return (
    <footer className="flex h-[19px] w-full items-center justify-between bg-gradient-to-b from-white to-[#b5b5b5] pl-[1px] text-[11px] leading-[19px] text-black">
      <span>Vybrat hrany pro zkosení</span>
      <span className="flex items-center">
        <span className="pr-7">1</span>
        <span className="h-4 w-px bg-white" />
        <span className="pl-[7px] pr-3">942</span>
      </span>
    </footer>
  );
}

const taskButtons = ["#d8a33c", "#9ba3aa", "#9ba3aa", "#9ba3aa", null, null, "#3b74b8", null, "#d83a3a", "#8fd0ea", "#efc13c"];

function Taskbar() {
  return (
    <div className="relative flex h-2 w-full overflow-visible border-t border-[#20282c] bg-[linear-gradient(90deg,#1c2529_0%,#2b3638_35%,#6a7a70_60%,#55645c_75%,#3b4744_100%)]">
      <div className="absolute bottom-0 left-[9px] h-[14px] w-[34px] overflow-hidden">
        <button type="button" aria-label="Start" className="block h-[34px] w-[34px] rounded-full border border-[#bcd3e4] bg-[radial-gradient(circle_at_50%_20%,#a9c9de_0%,#4c7ea3_40%,#1c4568_75%)]">
          <svg viewBox="0 0 16 14" className="mx-auto -mt-[2px] h-[14px] w-4" aria-hidden="true">
            <path d="M1 3Q4 0 7 2V8H1Z" fill="#e8622b" /><path d="M8 3Q11 5 15 3V9H8Z" fill="#8fc744" /><path d="M1 9H7V14H1Z" fill="#3c8fe0" /><path d="M8 10H15V14H8Z" fill="#f5c934" />
          </svg>
        </button>
      </div>
      <div className="ml-[59px] flex h-full gap-2">
        {taskButtons.map((tone, i) => (
          <span key={i} className={"flex h-full w-[38px] justify-center rounded-t-[3px] " + (tone ? "border border-b-0 border-[#a5afb3] bg-gradient-to-br from-[#aeb5b8] to-[#3f4b50]" : "")}>
            <span className="mt-1 h-1 w-3 rounded-t-[2px]" style={{ background: tone || "#5d7687" }} />
          </span>
        ))}
      </div>
      <span className="ml-auto h-full w-3 border border-b-0 border-[#a5afb3] bg-[#5b6668]" />
    </div>
  );
}

export default function App() {
  return (
    <div className={"flex min-h-screen w-full overflow-hidden bg-black " + SANS}>
      <div className="w-1 shrink-0 bg-[linear-gradient(180deg,#1a1a1a_0px,#222_30px,#777_45px,#111_95px,#0b3d70_110px,#1b5aa0_500px,#2c77c8_900px,#c9dcee_915px,#e6eef6_1040px,#174a86_1060px,#000_1085px)]" />
      <div className="flex min-w-0 flex-1 flex-col">
        <TitleBar />
        <main className="relative min-h-[600px] flex-1 overflow-hidden border-b-2 border-r-2 border-t-2 border-b-[#f1efe2] border-r-[#eef0f2] border-t-[#6f6f6f] bg-[#346495]">
          <div className="absolute right-[2px] top-[6px] flex gap-2">
            <button type="button" aria-label="Minimalizovat dokument"><WinGlyph kind="min" /></button>
            <button type="button" aria-label="Obnovit dokument"><WinGlyph kind="max" /></button>
            <button type="button" aria-label="Zavřít dokument"><WinGlyph kind="close" /></button>
          </div>
          <TubeModel />
          <ViewCube />
          <NavigationBar />
          <ChamferDialog />
          <MiniToolbar />
        </main>
        <DocumentTabs />
        <StatusBar />
        <Taskbar />
      </div>
      <div className="w-[5px] shrink-0 bg-[linear-gradient(180deg,#000_0px,#000_30px,#3a3a3a_34px,#000_60px,#000_95px,#003a66_97px,#0d4f92_300px,#2169b8_600px,#2b77c6_1070px,#000_1080px)]" />
    </div>
  );
}
